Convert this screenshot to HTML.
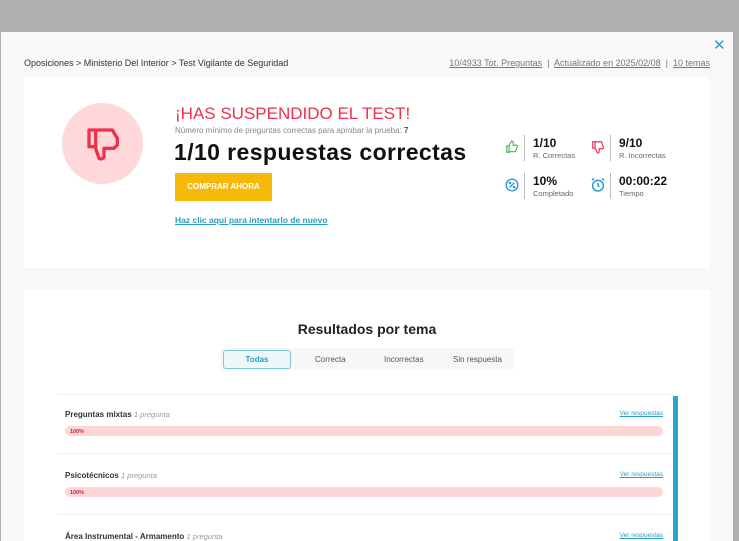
<!DOCTYPE html>
<html><head><meta charset="utf-8"><style>
*{box-sizing:border-box;margin:0;padding:0}
html,body{width:739px;height:541px;overflow:hidden}
body{background:#b0b0b0;font-family:"Liberation Sans",sans-serif;position:relative}
.modal{position:absolute;left:1px;top:32px;width:732px;height:509px;background:#f8f8f8;overflow:hidden}
.ab{position:absolute}
.card{position:absolute;background:#fff;overflow:hidden}
.crumb{left:23px;top:26px;font-size:9px;color:#333}
.top{right:23px;top:26px;font-size:9px;color:#777}
.top u{color:#777}
.x{left:712px;top:4px;color:#2aa3c6;font-size:15px}
.lbl{font-size:7.5px;color:#666}
.val{font-size:12px;font-weight:bold;color:#111}
.sep{position:absolute;width:1px;height:26px;background:#bbb}
.row{position:absolute;left:41px;width:598px}
.row .t{font-size:8px;font-weight:bold;color:#333}
.row .t i{font-weight:normal;color:#999;font-size:7.5px}
.row .v{position:absolute;right:0;top:0;font-size:6.5px;color:#2a9cc0;text-decoration:underline}
.bar{position:absolute;left:0;right:0;top:16px;height:10px;border-radius:5px;background:#ffd6d6;font-size:5.5px;color:#d0203a;padding:3px 5px;font-weight:bold}
.hr{position:absolute;left:34px;width:618px;height:1px;background:#eee}
</style></head><body>
<div class="modal">
<div class="ab crumb">Oposiciones &gt; Ministerio Del Interior &gt; Test Vigilante de Seguridad</div>
<div class="ab top"><u>10/4933 Tot. Preguntas</u> &nbsp;|&nbsp; <u>Actualizado en 2025/02/08</u> &nbsp;|&nbsp; <u>10 temas</u></div>
<div class="ab x">✕</div>
<div class="card" style="left:23px;top:45px;width:686px;height:191px">
 <div class="ab" style="left:38px;top:26px;width:81px;height:81px;border-radius:50%;background:#ffd9d9"></div>
 <svg class="ab" style="left:60px;top:48px" width="40" height="40" viewBox="0 0 24 24" fill="none" stroke="#f0304e" stroke-width="2" stroke-linejoin="round" stroke-linecap="round"><path d="M3 3h4v10H3z M7 3h10l3 5v4l-2 2h-6v5a2 2 0 0 1-3 1l-2-6"/></svg>
 <div class="ab" style="left:151px;top:27px;font-size:17px;color:#f0304e">¡HAS SUSPENDIDO EL TEST!</div>
 <div class="ab" style="left:151px;top:49px;font-size:8px;color:#888">Número mínimo de preguntas correctas para aprobar la prueba: <b style="color:#555">7</b></div>
 <div class="ab" style="left:150px;top:62px;font-size:23px;font-weight:bold;color:#111;letter-spacing:0.4px">1/10 respuestas correctas</div>
 <div class="ab" style="left:151px;top:96px;width:97px;height:28px;background:#f6b90a;color:#fff;font-size:8px;font-weight:bold;text-align:center;line-height:28px">COMPRAR AHORA</div>
 <div class="ab" style="left:151px;top:138px;font-size:8.5px;font-weight:bold;color:#2a9cc0;text-decoration:underline">Haz clic aquí para intentarlo de nuevo</div>
 <svg class="ab" style="left:481px;top:63px" width="14" height="14" viewBox="0 0 24 24" fill="none" stroke="#4cb84c" stroke-width="2"><path d="M3 10h4v11H3z M7 10l4-8a2 2 0 0 1 3 2v5h6a2 2 0 0 1 1 3l-3 8H7"/></svg>
 <div class="sep" style="left:500px;top:58px"></div>
 <div class="ab val" style="left:509px;top:59px">1/10</div><div class="ab lbl" style="left:509px;top:74px">R. Correctas</div>
 <svg class="ab" style="left:567px;top:63px" width="14" height="14" viewBox="0 0 24 24" fill="none" stroke="#f0304e" stroke-width="2"><path d="M3 3h4v11H3z M7 14l4 8a2 2 0 0 0 3-2v-5h6a2 2 0 0 0 1-3l-3-9H7"/></svg>
 <div class="sep" style="left:586px;top:58px"></div>
 <div class="ab val" style="left:595px;top:59px">9/10</div><div class="ab lbl" style="left:595px;top:74px">R. Incorrectas</div>
 <svg class="ab" style="left:481px;top:101px" width="14" height="14" viewBox="0 0 24 24" fill="none" stroke="#2a9cd0" stroke-width="2.4"><circle cx="12" cy="12" r="10"/><path d="M8 16L16 8"/><circle cx="8.5" cy="8.5" r="1"/><circle cx="15.5" cy="15.5" r="1"/></svg>
 <div class="sep" style="left:500px;top:96px"></div>
 <div class="ab val" style="left:509px;top:97px">10%</div><div class="ab lbl" style="left:509px;top:112px">Completado</div>
 <svg class="ab" style="left:566px;top:100px" width="16" height="16" viewBox="0 0 24 24" fill="none" stroke="#2a9cd0" stroke-width="2.2"><circle cx="12" cy="13" r="8"/><path d="M12 9v4l2 2M3 5l3-3M21 5l-3-3"/></svg>
 <div class="sep" style="left:586px;top:96px"></div>
 <div class="ab val" style="left:595px;top:97px">00:00:22</div><div class="ab lbl" style="left:595px;top:112px">Tiempo</div>
</div>
<div class="card" style="left:23px;top:258px;width:686px;height:251px">
 <div class="ab" style="left:0;width:686px;top:31px;text-align:center;font-size:14px;font-weight:bold;color:#222">Resultados por tema</div>
 <div class="ab" style="left:196px;top:58px;width:294px;height:22px;background:#f7f7f7;border-radius:3px"></div>
 <div class="ab" style="left:199px;top:60px;width:68px;height:19px;border:1px solid #7cc7dc;border-radius:3px;background:#eef8fb;font-size:8px;font-weight:bold;color:#2a9cc0;text-align:center;line-height:17px">Todas</div>
 <div class="ab" style="left:291px;top:65px;font-size:8px;color:#555">Correcta</div>
 <div class="ab" style="left:360px;top:65px;font-size:8px;color:#555">Incorrectas</div>
 <div class="ab" style="left:429px;top:65px;font-size:8px;color:#555">Sin respuesta</div>
 <div class="hr" style="top:104px"></div>
 <div class="row" style="top:120px"><div class="t">Preguntas mixtas <i>1 pregunta</i></div><div class="v">Ver respuestas</div><div class="bar">100%</div></div>
 <div class="hr" style="top:163px"></div>
 <div class="row" style="top:181px"><div class="t">Psicotécnicos <i>1 pregunta</i></div><div class="v">Ver respuestas</div><div class="bar">100%</div></div>
 <div class="hr" style="top:224px"></div>
 <div class="row" style="top:242px"><div class="t">Área Instrumental - Armamento <i>1 pregunta</i></div><div class="v">Ver respuestas</div></div>
 <div class="ab" style="left:649px;top:106px;width:5px;height:160px;background:#2aa7c8"></div>
</div>
</div>
</body></html>
